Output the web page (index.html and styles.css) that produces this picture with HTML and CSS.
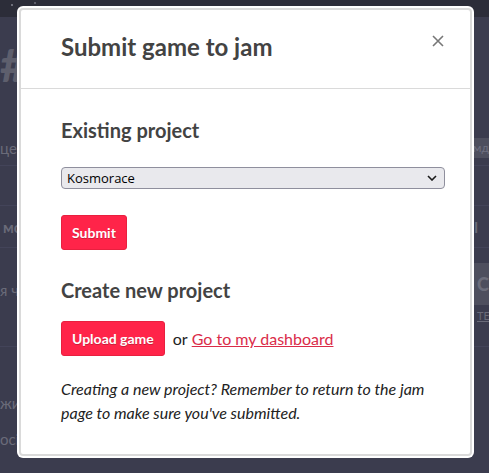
FILE: index.html
```html
<!DOCTYPE html>
<html lang="en">
<head>
<meta charset="utf-8">
<title>Submit game to jam</title>
<link rel="stylesheet" href="styles.css">
</head>
<body>
<div class="backdrop">
  <div class="topbar"></div>
  <div class="hero"><span class="jam-title">#1</span></div>
  <div class="bg-row row-a">
    <span class="bg-left">це</span>
    <span class="bg-chip">мд</span>
  </div>
  <div class="bg-row row-gap"></div>
  <div class="bg-row row-b">
    <span class="bg-left strong">мо</span>
    <span class="bg-right">l</span>
  </div>
  <div class="bg-row row-c">
    <span class="bg-left low">я ч</span>
    <div class="bg-side">
      <span class="bg-btn">С</span>
      <span class="bg-link">ТЕ</span>
    </div>
  </div>
  <div class="bg-list">
    <span class="bg-left">жи</span>
    <span class="bg-left">осі</span>
  </div>
</div>

<div class="modal">
  <div class="modal-inner">
    <div class="modal-header">
      <h1 class="modal-title">Submit game to jam</h1>
      <button class="close-btn" type="button" aria-label="Close">
        <svg width="12" height="12" viewBox="0 0 12 12"><path d="M1 1 L11 11 M11 1 L1 11" stroke="#777" stroke-width="1.6" fill="none"/></svg>
      </button>
    </div>
    <div class="modal-body">
      <h2 class="section-title">Existing project</h2>
      <div class="select-wrap">
        <select class="project-select">
          <option>Kosmorace</option>
        </select>
        <svg class="select-arrow" width="10" height="6" viewBox="0 0 10 6"><path d="M1 1 L5 5 L9 1" stroke="#1b1b1b" stroke-width="1.6" fill="none"/></svg>
      </div>
      <button class="btn submit-btn" type="button">Submit</button>
      <h2 class="section-title second">Create new project</h2>
      <div class="upload-row">
        <button class="btn" type="button">Upload game</button>
        <span class="or">or</span>
        <a class="dash-link" href="#">Go to my dashboard</a>
      </div>
      <p class="note">Creating a new project? Remember to return to the jam page to make sure you've submitted.</p>
    </div>
  </div>
</div>
</body>
</html>
```
FILE: styles.css
```css
html, body {
  margin: 0;
  padding: 0;
}
body {
  width: 489px;
  height: 473px;
  overflow: hidden;
  background: #3b3c4e;
  font-family: Lato, "Open Sans", sans-serif;
  position: relative;
}

/* ---------- page behind the modal ---------- */
.backdrop {
  display: flex;
  flex-direction: column;
  color: #6a6b79;
  font-size: 15px;
}
.topbar {
  height: 17px;
  background-color: #2c2d39;
  background-image:
    radial-gradient(circle at 12px 5px, #6d6e7a 0.8px, transparent 1.2px),
    radial-gradient(circle at 25px 13px, #5d5e6a 0.8px, transparent 1.2px),
    radial-gradient(circle at 35px 3px, #5d5e6a 0.8px, transparent 1.2px),
    radial-gradient(circle at 48px 9px, #6d6e7a 0.8px, transparent 1.2px);
}
.hero {
  height: 113px;
  box-sizing: border-box;
  padding-top: 28px;
}
.jam-title {
  display: block;
  font-size: 46px;
  font-weight: 900;
  line-height: 40px;
  color: #5e5f6d;
  white-space: nowrap;
}
.bg-row {
  display: flex;
  justify-content: space-between;
  align-items: center;
  border-bottom: 1px solid #434459;
}
.row-a {
  height: 35px;
}
.row-gap {
  height: 39px;
}
.row-b {
  height: 41px;
}
.row-c {
  height: 99px;
  align-items: flex-start;
  padding-top: 15px;
  box-sizing: border-box;
}
.bg-list {
  display: flex;
  flex-direction: column;
  padding-top: 47px;
  gap: 18px;
}
.bg-left {
  white-space: nowrap;
  font-size: 15px;
  line-height: 18px;
}
.bg-left.strong {
  font-weight: 700;
  margin-left: 3px;
}
.bg-left.low {
  margin-top: 18px;
}
.bg-chip {
  width: 16px;
  background: #4e4f5e;
  padding-left: 4px;
  line-height: 20px;
  font-size: 12px;
  color: #6f7080;
  overflow: hidden;
}
.bg-right {
  font-weight: 700;
  margin-right: 11px;
}
.bg-side {
  display: flex;
  flex-direction: column;
  width: 16px;
}
.bg-btn {
  background: #4e4f5e;
  height: 42px;
  line-height: 42px;
  font-weight: 900;
  font-size: 18px;
  padding-left: 4px;
  color: #6c6d7b;
  overflow: hidden;
}
.bg-link {
  margin-top: 4px;
  padding-left: 4px;
  text-decoration: underline;
  font-size: 11px;
  white-space: nowrap;
}

/* ---------- modal ---------- */
.modal {
  position: absolute;
  left: 17px;
  top: 6px;
  width: 457px;
  height: 452px;
  box-sizing: border-box;
  padding: 2px;
  background: #fff;
  border-radius: 6px;
}
.modal-inner {
  height: 100%;
  box-sizing: border-box;
  border: 2px solid #dadada;
  border-radius: 4px;
  background: #fff;
}
.modal-header {
  position: relative;
  padding: 22px 40px 27px 40px;
  border-bottom: 1px solid #dadada;
}
.modal-title {
  margin: 0;
  font-size: 24px;
  line-height: 29px;
  font-weight: 700;
  color: #434343;
}
.close-btn {
  position: absolute;
  top: 25px;
  right: 26px;
  width: 12px;
  height: 12px;
  padding: 0;
  border: 0;
  background: none;
  display: block;
}
.close-btn svg {
  display: block;
}
.modal-body {
  padding: 29px 25px 0 40px;
}
.section-title {
  margin: 0;
  font-size: 20px;
  line-height: 24px;
  font-weight: 700;
  color: #434343;
}
.section-title.second {
  margin-top: 28px;
}
.select-wrap {
  position: relative;
  margin-top: 25px;
}
.project-select {
  appearance: none;
  -webkit-appearance: none;
  display: block;
  width: 100%;
  height: 22px;
  box-sizing: border-box;
  border: 1px solid #8f8f9d;
  border-radius: 4px;
  background: #e9e9ed;
  font-family: "Open Sans", "Noto Sans", sans-serif;
  font-size: 13px;
  color: #000;
  padding: 0 20px 0 5px;
  line-height: 20px;
}
.select-arrow {
  position: absolute;
  right: 8px;
  top: 8px;
  pointer-events: none;
}
.btn {
  display: inline-flex;
  align-items: center;
  height: 35px;
  box-sizing: border-box;
  padding: 0 10px;
  border: 1px solid #e8203f;
  border-radius: 3px;
  background: #ff2449;
  color: #fff;
  font-family: Lato, sans-serif;
  font-size: 14px;
  font-weight: 700;
  text-shadow: 0 1px 0 #cc1d3a;
  cursor: pointer;
}
.submit-btn {
  margin-top: 26px;
}
.upload-row {
  display: flex;
  align-items: center;
  margin-top: 19px;
  font-size: 16px;
  color: #222;
}
.or {
  margin-left: 8px;
  margin-right: 4px;
}
.dash-link {
  color: #da2c49;
  text-decoration: underline;
}
.note {
  margin: 21px 0 0 0;
  font-size: 16px;
  line-height: 24px;
  font-style: italic;
  color: #222;
}
```
